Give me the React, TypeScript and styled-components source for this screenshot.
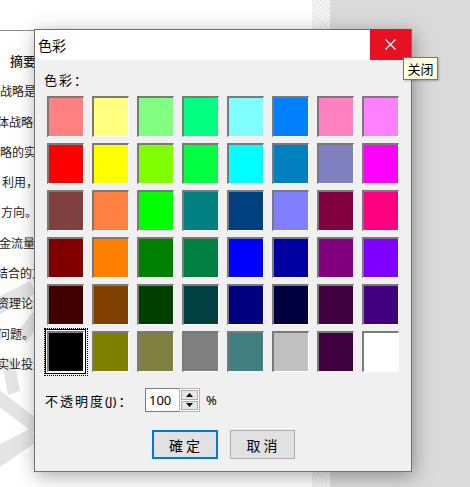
import React from 'react'
import styled, { createGlobalStyle, css } from 'styled-components'

const GlobalStyle = createGlobalStyle`
  html, body {
    margin: 0;
    padding: 0;
  }
  body {
    width: 470px;
    height: 487px;
    overflow: hidden;
    background: #dadada;
    font-family: "Noto Sans", "Noto Sans CJK SC", sans-serif;
    color: #000;
  }
`

const Screen = styled.div`
  position: relative;
  width: 470px;
  height: 487px;
  display: flex;
  background: #dadada;
  overflow: hidden;
`

const Page = styled.div`
  width: 312px;
  background: #fff;
  display: grid;
  grid-template-rows: 31px 1fr;
  overflow: hidden;
`

const PageTop = styled.div`
  border-bottom: 1px solid #8c8c8c;
  background: #fff;
`

const PageBody = styled.div`
  display: grid;
  overflow: hidden;
`

const Watermark = styled.svg`
  grid-area: 1 / 1;
  width: 120px;
  height: 455px;
`

const DocText = styled.div`
  grid-area: 1 / 1;
  padding-top: 15px;
  font-family: "Noto Sans CJK SC", sans-serif;
  font-size: 12px;
  line-height: 30.3px;
  color: #1c1c1c;
  white-space: nowrap;
`

const DocLine = styled.div<{ $shift: number; $bold?: boolean }>`
  margin-left: ${p => p.$shift}px;
  font-weight: ${p => (p.$bold ? 500 : 400)};
  font-size: ${p => (p.$bold ? 13 : 12)}px;
`

const PageEdge = styled.div`
  width: 18px;
  background: repeating-linear-gradient(45deg, #f3f3f3 0 2px, #e9e9e9 2px 3px),
    #f0f0f0;
`

const Desk = styled.div`
  flex: 1;
  background: #dadada;
`

const Dialog = styled.div`
  position: absolute;
  left: 34px;
  top: 29px;
  width: 378px;
  height: 443px;
  box-sizing: border-box;
  border: 1px solid #6f6f6f;
  background: #f0f0f0;
  box-shadow: 2px 4px 18px rgba(0, 0, 0, 0.35);
  display: flex;
  flex-direction: column;
`

const TitleBar = styled.div`
  height: 30px;
  background: #fff;
  display: flex;
  align-items: center;
  justify-content: space-between;
`

const Title = styled.span`
  padding-left: 3px;
  font-family: "Noto Sans CJK SC", sans-serif;
  font-size: 14px;
`

const CloseButton = styled.div`
  width: 41px;
  height: 31px;
  margin-top: -1px;
  background: #e81123;
  display: flex;
  align-items: center;
  justify-content: center;
`

const Body = styled.div`
  padding: 10px 0 0 9px;
  display: flex;
  flex-direction: column;
`

const Label = styled.div`
  font-family: "Noto Sans CJK SC", sans-serif;
  font-size: 13px;
  line-height: 20px;
  height: 20px;
  letter-spacing: 2px;
`

const Grid = styled.div`
  margin: 6px 0 0 3px;
  display: grid;
  grid-template-columns: repeat(8, 37px);
  grid-auto-rows: 41px;
  column-gap: 8px;
  row-gap: 6px;
`

const Swatch = styled.div<{ $color: string; $selected?: boolean }>`
  position: relative;
  box-sizing: border-box;
  background: ${p => p.$color};
  border-style: solid;
  border-width: 2px 1px 1px 2px;
  border-color: #7a7a7a #fff #fff #7a7a7a;
  ${p =>
    p.$selected &&
    css`
      box-shadow: 0 0 0 1px #fff, 0 0 0 2px #000;
      &::after {
        content: '';
        position: absolute;
        inset: -5px;
        border: 1px dotted #000;
      }
    `}
`

const OpacityRow = styled.div`
  margin-top: 16px;
  height: 24px;
  display: flex;
  align-items: center;
`

const OpacityLabel = styled.div`
  width: 100px;
  padding-left: 1px;
  font-size: 13px;
  letter-spacing: 2px;
  white-space: nowrap;
`

const Hotkey = styled.span`
  font-size: 13px;
  letter-spacing: 0;
  margin-right: 2px;
`

const NumberBox = styled.div`
  width: 34px;
  height: 24px;
  box-sizing: border-box;
  border: 1px solid #7a7a7a;
  border-right: none;
  background: #fff;
  font-size: 13px;
  line-height: 22px;
  padding-left: 3px;
`

const Spinner = styled.div`
  width: 21px;
  height: 24px;
  box-sizing: border-box;
  border: 1px solid #b5b5b5;
  background: #fff;
  display: flex;
  flex-direction: column;
  gap: 1px;
  padding: 1px;
`

const SpinButton = styled.div`
  flex: 1;
  box-sizing: border-box;
  border: 1px solid #adadad;
  background: #e6e6e6;
  display: flex;
  align-items: center;
  justify-content: center;
`

const Percent = styled.span`
  margin-left: 6px;
  font-size: 13px;
`

const ButtonRow = styled.div`
  margin: 18px 0 0 -9px;
  display: flex;
  justify-content: center;
  gap: 12px;
`

const Button = styled.div<{ $default?: boolean }>`
  width: ${p => (p.$default ? 66 : 65)}px;
  height: 29px;
  box-sizing: border-box;
  background: #e1e1e1;
  border: ${p => (p.$default ? '2px solid #0078d7' : '1px solid #adadad')};
  display: flex;
  align-items: center;
  justify-content: center;
  font-family: "Noto Sans CJK SC", sans-serif;
  font-size: 14px;
  letter-spacing: 3px;
  padding-left: 3px;
`

const Tooltip = styled.div`
  position: absolute;
  left: 403px;
  top: 57px;
  width: 35px;
  height: 23px;
  box-sizing: border-box;
  border: 1px solid #767676;
  background: #ffffe1;
  box-shadow: 1px 1px 2px rgba(0, 0, 0, 0.25);
  font-family: "Noto Sans CJK SC", sans-serif;
  font-size: 13px;
  display: flex;
  align-items: center;
  justify-content: center;
`

const colors = [
  ['#ff8080', '#ffff80', '#80ff80', '#00ff80', '#80ffff', '#0080ff', '#ff80c0', '#ff80ff'],
  ['#ff0000', '#ffff00', '#80ff00', '#00ff40', '#00ffff', '#0080c0', '#8080c0', '#ff00ff'],
  ['#804040', '#ff8040', '#00ff00', '#008080', '#004080', '#8080ff', '#800040', '#ff0080'],
  ['#800000', '#ff8000', '#008000', '#008040', '#0000ff', '#0000a0', '#800080', '#8000ff'],
  ['#400000', '#804000', '#004000', '#004040', '#000080', '#000040', '#400040', '#400080'],
  ['#000000', '#808000', '#808040', '#808080', '#408080', '#c0c0c0', '#400040', '#ffffff'],
]

const docLines = [
  { text: '摘要：本文', shift: 10, bold: true },
  { text: '战略是企业发展的重要组成部分', shift: 0 },
  { text: '体战略的制定与实施', shift: -3 },
  { text: '略的实施过程中资金的', shift: 0 },
  { text: '利用，提高资金效率', shift: 2 },
  { text: '方向。同时分析现金', shift: 1 },
  { text: '金流量与投资决策', shift: -1 },
  { text: '结合的方法与途径', shift: -4 },
  { text: '资理论的发展现状', shift: -3 },
  { text: '问题。最后提出对策', shift: -2 },
  { text: '实业投资的建议', shift: -3 },
]

function App() {
  return (
    <>
      <GlobalStyle />
      <Screen>
        <Page>
          <PageTop />
          <PageBody>
            <Watermark viewBox="0 0 120 455">
              <g fill="#e4e4e4">
                <path d="M-10 270 L30 250 L36 262 L-4 286 Z" />
                <path d="M18 300 L44 268 L52 276 L26 312 Z" />
                <path d="M-10 352 L40 390 L34 402 L-14 366 Z" />
                <path d="M-10 418 L30 398 L38 410 L-6 440 Z" />
                <path d="M2 330 L14 326 L20 360 L8 364 Z" />
              </g>
            </Watermark>
            <DocText>
              {docLines.map(line => (
                <DocLine key={line.text} $shift={line.shift} $bold={line.bold}>
                  {line.text}
                </DocLine>
              ))}
            </DocText>
          </PageBody>
        </Page>
        <PageEdge />
        <Desk />

        <Dialog>
          <TitleBar>
            <Title>色彩</Title>
            <CloseButton>
              <svg width="11" height="11" viewBox="0 0 11 11">
                <path d="M0.5 0.5 L10.5 10.5 M10.5 0.5 L0.5 10.5" stroke="#fff" strokeWidth="1.2" />
              </svg>
            </CloseButton>
          </TitleBar>
          <Body>
            <Label>色彩：</Label>
            <Grid>
              {colors.map((row, r) =>
                row.map((c, i) => (
                  <Swatch key={`${r}-${i}`} $color={c} $selected={r === 5 && i === 0} />
                ))
              )}
            </Grid>
            <OpacityRow>
              <OpacityLabel>
                不透明度<Hotkey>(J)</Hotkey>：
              </OpacityLabel>
              <NumberBox>100</NumberBox>
              <Spinner>
                <SpinButton>
                  <svg width="7" height="4" viewBox="0 0 7 4">
                    <path d="M0 4 L3.5 0 L7 4 Z" fill="#000" />
                  </svg>
                </SpinButton>
                <SpinButton>
                  <svg width="7" height="4" viewBox="0 0 7 4">
                    <path d="M0 0 L3.5 4 L7 0 Z" fill="#000" />
                  </svg>
                </SpinButton>
              </Spinner>
              <Percent>%</Percent>
            </OpacityRow>
            <ButtonRow>
              <Button $default>確定</Button>
              <Button>取消</Button>
            </ButtonRow>
          </Body>
        </Dialog>
        <Tooltip>关闭</Tooltip>
      </Screen>
    </>
  )
}

export default App
